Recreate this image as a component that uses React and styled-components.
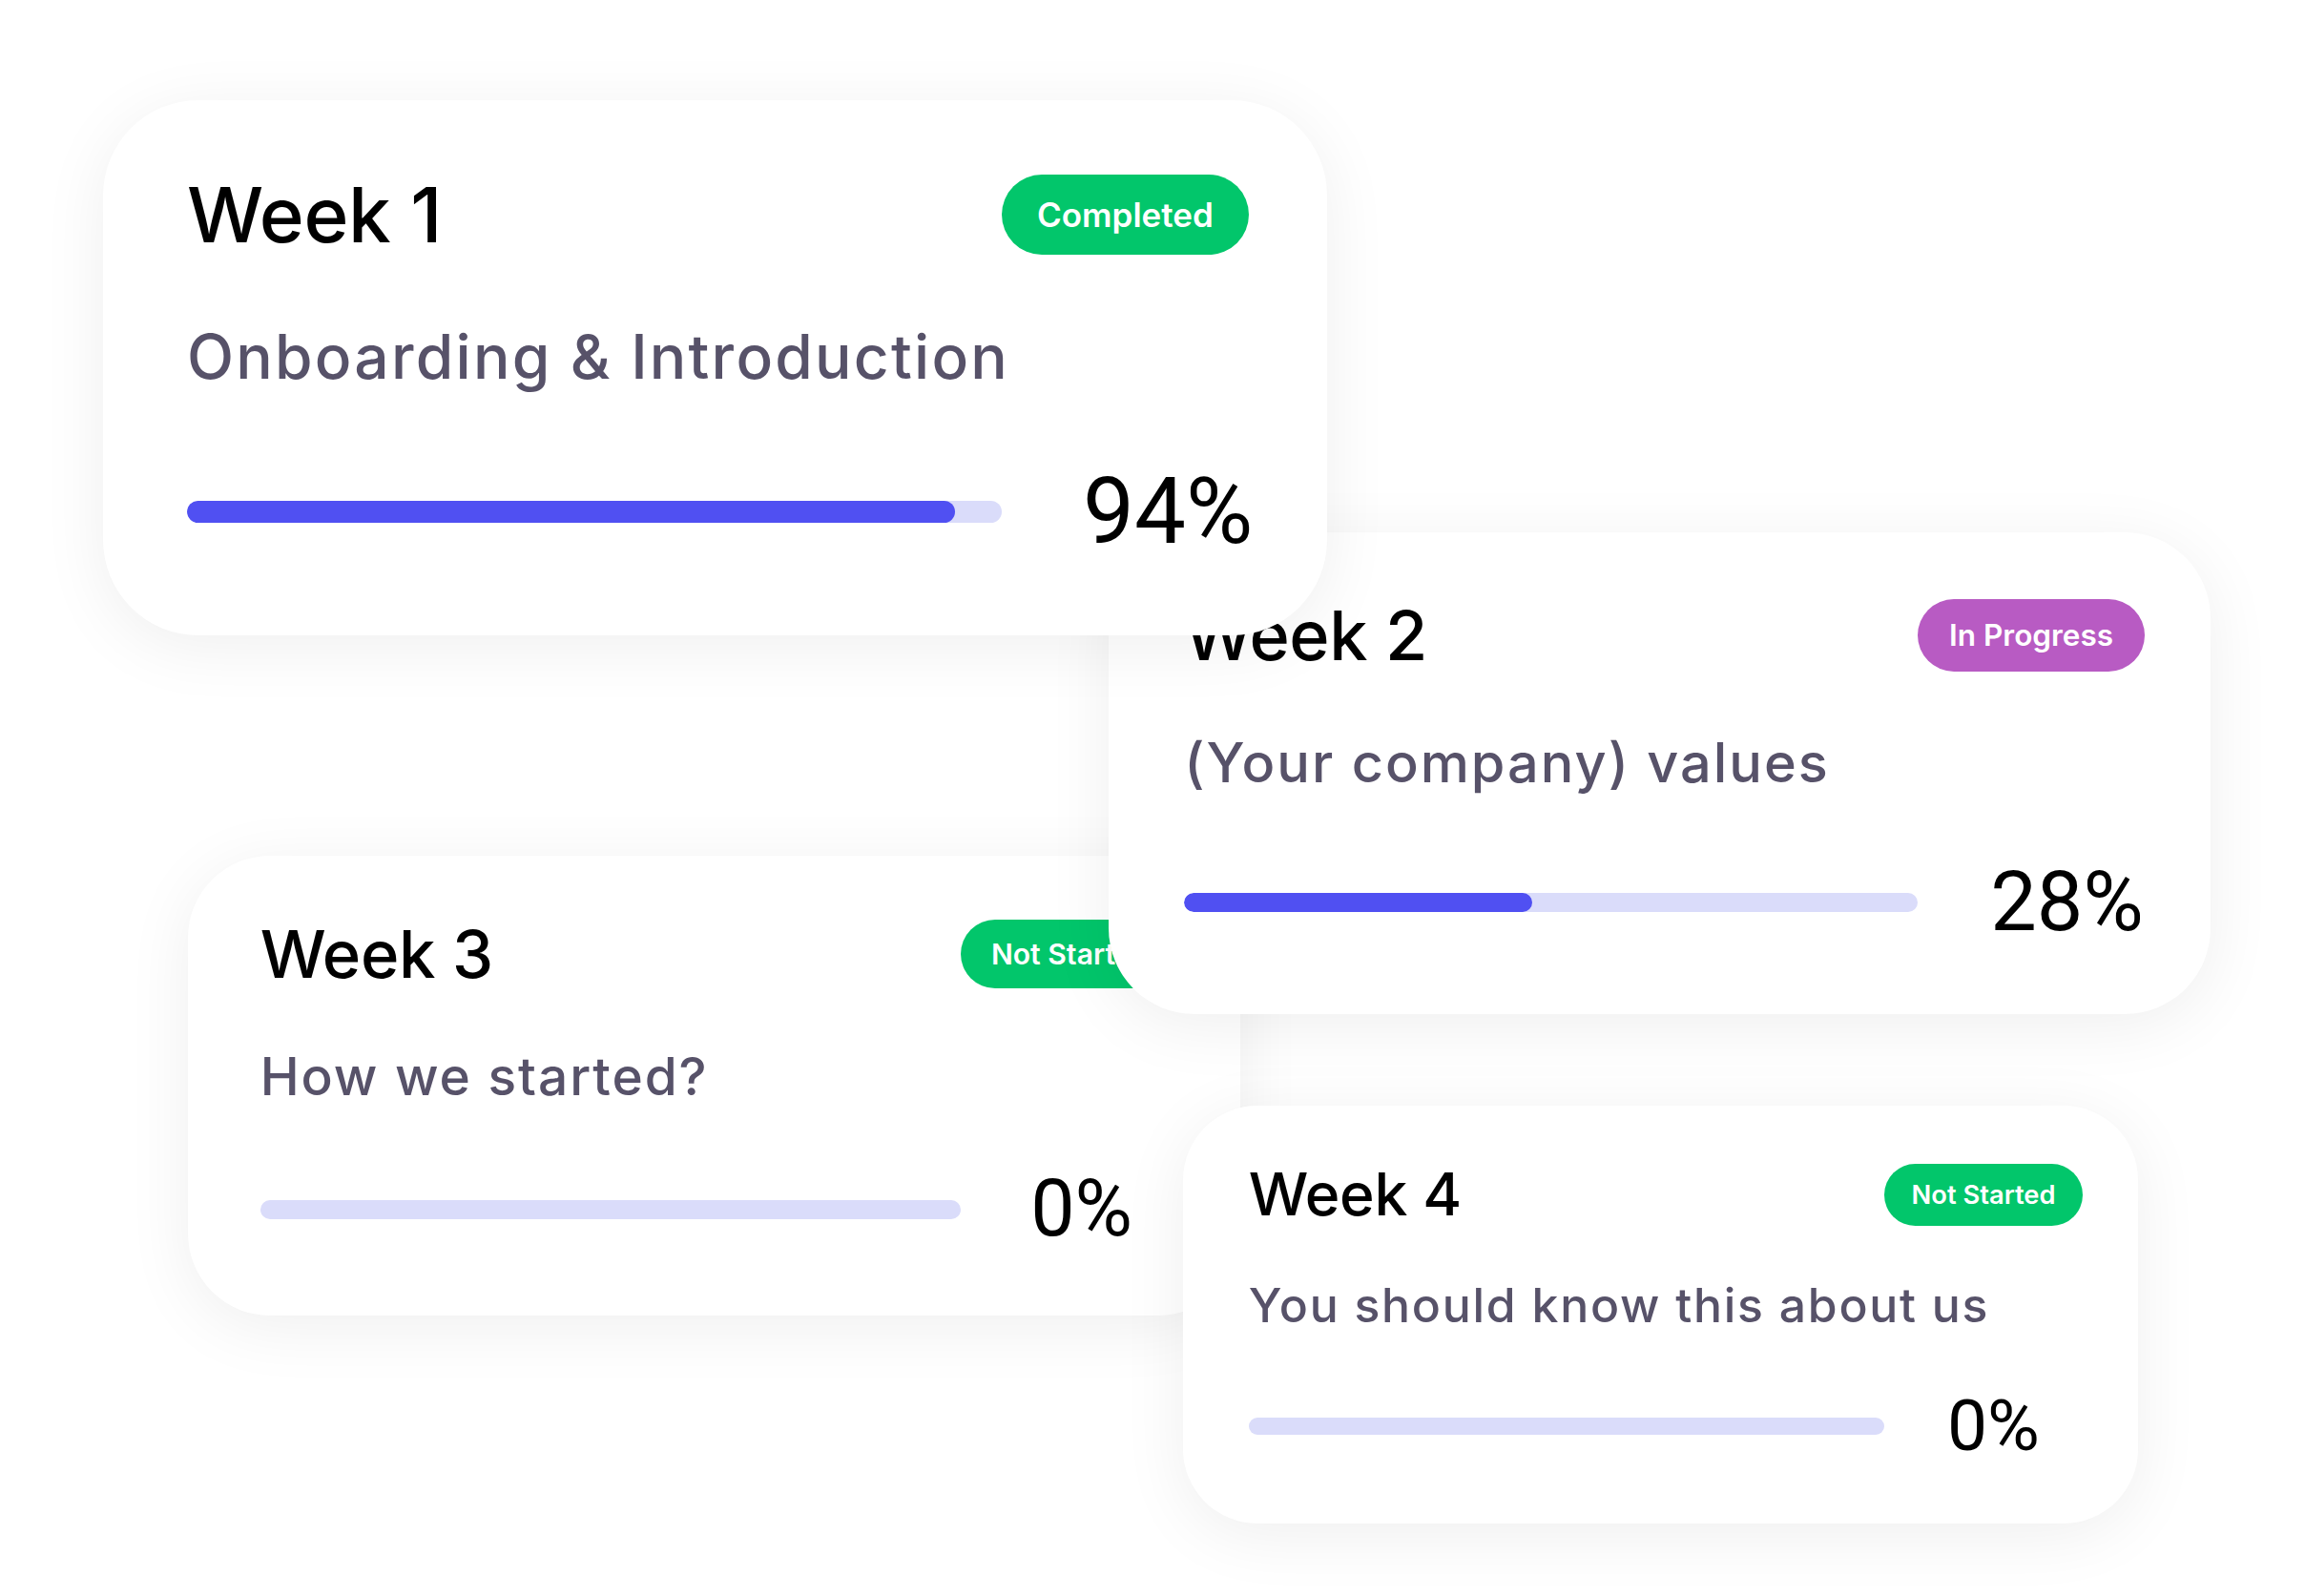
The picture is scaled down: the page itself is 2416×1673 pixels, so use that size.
import React from "react";
import styled, { createGlobalStyle } from "styled-components";

const Global = createGlobalStyle`
  html, body { margin: 0; padding: 0; background: #ffffff; }
  body { font-family: Inter, "Noto Sans", sans-serif; }
  * { box-sizing: border-box; }
`;

const Canvas = styled.div`
  position: relative;
  width: 2416px;
  height: 1673px;
  overflow: hidden;
  background: #ffffff;
`;

const Card = styled.section`
  --s: ${(p) => p.$s};
  position: absolute;
  left: ${(p) => p.$x}px;
  top: ${(p) => p.$y}px;
  z-index: ${(p) => p.$z};
  width: calc(1283px * var(--s));
  padding: calc(78px * var(--s)) 0 calc(83px * var(--s)) calc(88px * var(--s));
  display: flex;
  flex-direction: column;
  background: #ffffff;
  border-radius: calc(100px * var(--s));
  box-shadow: 0 12px 70px rgba(0, 0, 0, 0.065);
`;

const Row = styled.div`
  display: grid;
  grid-template-columns: calc(854px * var(--s)) auto;
  align-items: center;
  justify-items: start;
`;

const Header = styled(Row)`
  height: calc(84px * var(--s));
`;

const Title = styled.h2`
  margin: 0;
  font-family: Inter, sans-serif;
  font-weight: 500;
  font-size: calc(80px * var(--s));
  line-height: 1;
  letter-spacing: -0.005em;
  color: #000000;
`;

const tones = {
  done: "#02c66b",
  progress: "#b85bc3",
  idle: "#02c66b",
};

const Badge = styled.span`
  display: inline-flex;
  align-items: center;
  justify-content: center;
  height: calc(84px * var(--s));
  padding: 0 calc(37px * var(--s));
  border-radius: 999px;
  background: ${(p) => tones[p.$tone]};
  color: #ffffff;
  font-family: Inter, sans-serif;
  font-weight: 600;
  font-size: calc(35px * var(--s));
  white-space: nowrap;
`;

const Subtitle = styled.p`
  margin: calc(75px * var(--s)) 0 0;
  font-family: Inter, sans-serif;
  font-weight: 500;
  font-size: calc(64px * var(--s));
  line-height: 1;
  letter-spacing: 0.035em;
  color: #575269;
  white-space: nowrap;
`;

const ProgressRow = styled(Row)`
  margin-top: calc(82px * var(--s));
  height: calc(95px * var(--s));
`;

const Track = styled.div`
  width: 100%;
  height: calc(23px * var(--s));
  border-radius: 999px;
  background: #dadcfa;
  overflow: hidden;
  display: flex;
`;

const Fill = styled.div`
  height: 100%;
  border-radius: 999px;
  background: #5050f2;
`;

const Percent = styled.span`
  margin-left: calc(85px * var(--s));
  font-family: Roboto, sans-serif;
  font-weight: 400;
  font-size: calc(96px * var(--s));
  line-height: 1;
  color: #000000;
`;

const weeks = [
  { id: 3, x: 197, y: 897, s: 0.86, z: 1, title: "Week 3", badge: "Not Started", tone: "idle", sub: "How we started?", pct: 0, fill: 0 },
  { id: 2, x: 1162, y: 558, s: 0.9, z: 2, title: "Week 2", badge: "In Progress", tone: "progress", sub: "(Your company) values", pct: 28, fill: 0.475 },
  { id: 1, x: 108, y: 105, s: 1, z: 3, title: "Week 1", badge: "Completed", tone: "done", sub: "Onboarding & Introduction", pct: 94, fill: 0.943 },
  { id: 4, x: 1240, y: 1159, s: 0.78, z: 4, title: "Week 4", badge: "Not Started", tone: "idle", sub: "You should know this about us", pct: 0, fill: 0 },
];

export default function App() {
  return (
    <>
      <Global />
      <Canvas>
        {weeks.map((w) => (
          <Card key={w.id} $x={w.x} $y={w.y} $s={w.s} $z={w.z}>
            <Header>
              <Title>{w.title}</Title>
              <Badge $tone={w.tone}>{w.badge}</Badge>
            </Header>
            <Subtitle>{w.sub}</Subtitle>
            <ProgressRow>
              <Track>
                {w.fill > 0 && <Fill style={{ width: `${w.fill * 100}%` }} />}
              </Track>
              <Percent>{w.pct}%</Percent>
            </ProgressRow>
          </Card>
        ))}
      </Canvas>
    </>
  );
}
